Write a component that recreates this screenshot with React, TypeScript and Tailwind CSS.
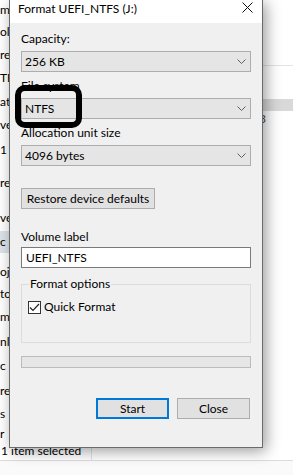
import React from "react";

const navItems = [
  { t: "m", cls: "mt-[2px] h-[16px] leading-[16px]" },
  { t: "oli", cls: "mt-[6px] h-[16px] leading-[16px]" },
  { t: "re", cls: "mt-[7px] h-[16px] leading-[16px]" },
  { t: "TE", cls: "mt-[7px] h-[16px] leading-[16px]" },
  { t: "at", cls: "mt-[8px] h-[16px] leading-[16px]" },
  { t: "ve", cls: "mt-[7px] h-[16px] leading-[16px]" },
  { t: "1", cls: "mt-[9px] h-[16px] leading-[16px]" },
  { t: "re", cls: "mt-[17px] h-[16px] leading-[16px]" },
  { t: "ve", cls: "mt-[19px] h-[16px] leading-[16px]" },
  { t: "c", cls: "mt-[5px] h-[22px] leading-[22px] bg-[#dde3e9]" },
  { t: "oj", cls: "mt-[11px] h-[16px] leading-[16px]" },
  { t: "to", cls: "mt-[6px] h-[16px] leading-[16px]" },
  { t: "m", cls: "mt-[7px] h-[16px] leading-[16px]" },
  { t: "nl", cls: "mt-[9px] h-[16px] leading-[16px]" },
  { t: "c", cls: "mt-[8px] h-[16px] leading-[16px]" },
  { t: "re", cls: "mt-[9px] h-[16px] leading-[16px]" },
  { t: "s", cls: "mt-[7px] h-[16px] leading-[16px]" },
  { t: "r", cls: "mt-[4px] h-[16px] leading-[16px]" },
];

function Chevron() {
  return (
    <svg width="9" height="5" viewBox="0 0 9 5" className="shrink-0">
      <path d="M0.5 0.5 L4.5 4.5 L8.5 0.5" fill="none" stroke="#5f5f5f" strokeWidth="1" />
    </svg>
  );
}

function Combo({ label, value, first }: { label: string; value: string; first?: boolean }) {
  return (
    <>
      <div className={first ? "mt-[8px] h-[16px] leading-[16px]" : "mt-[6px] h-[16px] leading-[16px]"}>{label}</div>
      <div className="mt-[4px] flex h-[21px] items-center justify-between border border-[#adadad] bg-[#e5e5e5] pl-[3px] pr-[4px]">
        <span>{value}</span>
        <Chevron />
      </div>
    </>
  );
}

function FormatDialog() {
  return (
    <div className="absolute left-[9px] top-0 flex h-[448px] w-[254px] flex-col border-x border-b border-[#6a6a6a] bg-[#f0f0f0] shadow-[3px_3px_14px_rgba(0,0,0,0.4)]">
      <div className="flex h-[23px] items-start justify-between bg-white pl-[8px] pr-[9px]">
        <span className="pt-[1px] leading-[16px]">Format UEFI_NTFS (J:)</span>
        <svg width="11" height="11" viewBox="0 0 11 11" className="mt-[2px]">
          <path d="M0.5 0.5 L10.5 10.5 M10.5 0.5 L0.5 10.5" stroke="#111" strokeWidth="1" />
        </svg>
      </div>

      <div className="flex flex-1 flex-col px-[11px]">
        <Combo label="Capacity:" value="256 KB" first />
        <Combo label="File system" value="NTFS" />
        <Combo label="Allocation unit size" value="4096 bytes" />

        <button
          type="button"
          className="mt-[22px] h-[21px] w-[134px] border border-[#adadad] bg-[#e1e1e1] text-center leading-[19px]"
        >
          Restore device defaults
        </button>

        <div className="mt-[20px] h-[16px] leading-[16px]">Volume label</div>
        <div className="mt-[2px] flex h-[21px] items-center border border-[#7a7a7a] bg-white pl-[4px]">
          UEFI_NTFS
        </div>

        <fieldset className="mt-[8px] h-[67px] border border-[#dcdcdc] px-[6px]">
          <legend className="ml-[1px] h-[16px] px-[1px] leading-[16px]">Format options</legend>
          <div className="mt-[7px] flex h-[16px] items-center gap-[3px]">
            <span className="flex h-[13px] w-[13px] items-center justify-center border border-[#333] bg-white">
              <svg width="11" height="9" viewBox="0 0 11 9">
                <path d="M1 4.5 L4 7.5 L10 1" fill="none" stroke="#222" strokeWidth="1.2" />
              </svg>
            </span>
            <span className="leading-[16px]">Quick Format</span>
          </div>
        </fieldset>

        <div className="mt-[13px] h-[12px] border border-[#bcbcbc] bg-[#e6e6e6]" />

        <div className="mt-[30px] flex justify-end gap-[8px] pr-[1px]">
          <button
            type="button"
            className="h-[21px] w-[73px] border-2 border-[#0078d7] bg-[#e1e1e1] text-center leading-[17px]"
          >
            Start
          </button>
          <button
            type="button"
            className="h-[21px] w-[73px] border border-[#adadad] bg-[#e1e1e1] text-center leading-[19px]"
          >
            Close
          </button>
        </div>
      </div>
    </div>
  );
}

export default function App() {
  return (
    <div className="relative h-[475px] w-[293px] overflow-hidden bg-white font-['Segoe_UI',Lato,sans-serif] text-[12px] text-black">
      <div className="flex h-full flex-col">
        <div className="flex h-[441px]">
          <nav className="flex w-[20px] shrink-0 flex-col whitespace-nowrap">
            {navItems.map((item, i) => (
              <div key={i} className={item.cls}>
                {item.t}
              </div>
            ))}
          </nav>
          <div className="flex flex-1 flex-col">
            <div className="mt-[65px] border-t border-[#e3e3e3]" />
            <div className="mt-[33px] h-[12px] bg-[#d9d9d9]" />
            <div className="h-[16px] pl-[239px] leading-[16px] text-[#444]">3</div>
          </div>
        </div>
        <div className="flex h-[20px] items-center border-b border-[#dcdcdc]">
          <span className="pl-[1px] leading-[20px]">1 item selected</span>
          <span className="ml-[10px] h-[18px] border-l border-[#e3e3e3]" />
        </div>
        <div className="flex-1 bg-[#fafafa]" />
      </div>

      <FormatDialog />

      <div className="pointer-events-none absolute left-[15px] top-[85px] h-[43px] w-[67px] rounded-[10px] border-[6px] border-black" />
    </div>
  );
}
